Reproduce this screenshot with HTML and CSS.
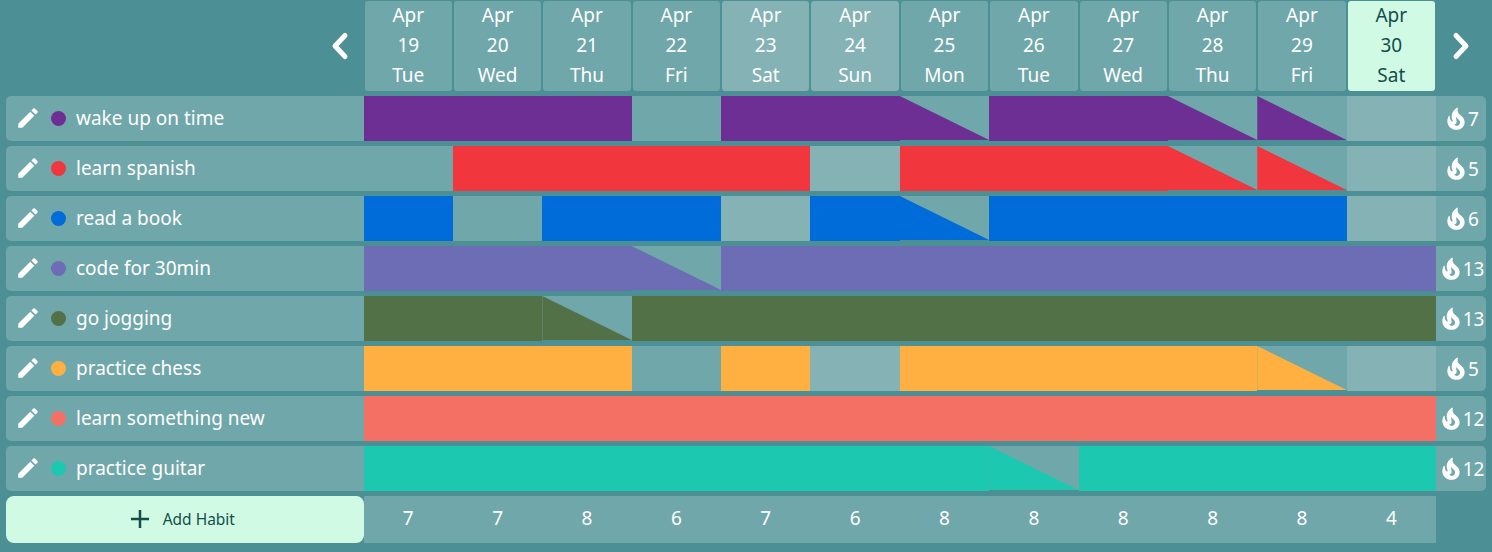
FILE: index.html
```html
<!DOCTYPE html>
<html lang="en">
<head>
    <meta charset="UTF-8">
    <meta name="viewport" content="width=device-width, initial-scale=1.0">
    <title>Habit Tracker</title>
    <link rel="stylesheet" href="styles.css">
</head>
<body>
    <svg class="sprites" aria-hidden="true">
        <symbol id="pencil" viewBox="0 0 24 24"><path d="M3 17.25V21h3.75L17.81 9.94l-3.75-3.75L3 17.25zM20.71 7.04c.39-.39.39-1.02 0-1.41l-2.34-2.34c-.39-.39-1.02-.39-1.41 0l-1.83 1.83 3.75 3.75 1.83-1.83z"/></symbol>
        <symbol id="flame" viewBox="0 0 24 24"><path fill-rule="evenodd" d="M19.48 12.35c-1.57-4.08-7.16-4.3-5.81-10.23.1-.44-.37-.78-.75-.55C9.29 3.71 6.68 8 8.87 13.62c.18.46-.36.89-.75.59-1.81-1.37-2-3.34-1.84-4.75.06-.52-.62-.77-.91-.34C4.69 10.16 4 11.84 4 14.37c.38 5.6 5.11 7.32 6.81 7.54 2.43.31 5.06-.14 6.95-1.87 2.08-1.93 2.84-5.01 1.72-7.69zM10.2 17.38c1.44-.35 2.18-1.39 2.38-2.31.33-1.43-.96-2.83-.09-5.09.33 1.87 3.27 3.04 3.27 5.08.08 2.53-2.66 4.7-5.56 2.32z"/></symbol>
    </svg>

    <main class="tracker">
        <header class="grid-row head">
            <button class="nav nav-prev" type="button" aria-label="Previous">
                <svg width="20" height="30" viewBox="0 0 20 30"><path d="M15 4.5 5 15l10 10.5"/></svg>
            </button>
            <div class="day">Apr<br>19<br>Tue</div>
            <div class="day">Apr<br>20<br>Wed</div>
            <div class="day">Apr<br>21<br>Thu</div>
            <div class="day">Apr<br>22<br>Fri</div>
            <div class="day weekend">Apr<br>23<br>Sat</div>
            <div class="day weekend">Apr<br>24<br>Sun</div>
            <div class="day">Apr<br>25<br>Mon</div>
            <div class="day">Apr<br>26<br>Tue</div>
            <div class="day">Apr<br>27<br>Wed</div>
            <div class="day">Apr<br>28<br>Thu</div>
            <div class="day">Apr<br>29<br>Fri</div>
            <div class="day today">Apr<br>30<br>Sat</div>
            <button class="nav nav-next" type="button" aria-label="Next">
                <svg width="20" height="30" viewBox="0 0 20 30"><path d="M5 4.5 15 15 5 25.5"/></svg>
            </button>
        </header>

        <section class="grid-row habit purple">
            <div class="name"><svg class="edit"><use href="#pencil"/></svg><span class="dot"></span>wake up on time</div>
            <i class="on"></i><i class="on"></i><i class="on"></i><i></i><i class="on"></i><i class="on"></i><i class="half"></i><i class="on"></i><i class="on"></i><i class="half"></i><i class="half"></i><i class="weekend"></i>
            <div class="streak"><svg class="fire"><use href="#flame"/></svg>7</div>
        </section>
        <section class="grid-row habit red">
            <div class="name"><svg class="edit"><use href="#pencil"/></svg><span class="dot"></span>learn spanish</div>
            <i></i><i class="on"></i><i class="on"></i><i class="on"></i><i class="on"></i><i class="weekend"></i><i class="on"></i><i class="on"></i><i class="on"></i><i class="half"></i><i class="half"></i><i class="weekend"></i>
            <div class="streak"><svg class="fire"><use href="#flame"/></svg>5</div>
        </section>
        <section class="grid-row habit blue">
            <div class="name"><svg class="edit"><use href="#pencil"/></svg><span class="dot"></span>read a book</div>
            <i class="on"></i><i></i><i class="on"></i><i class="on"></i><i class="weekend"></i><i class="on"></i><i class="half"></i><i class="on"></i><i class="on"></i><i class="on"></i><i class="on"></i><i class="weekend"></i>
            <div class="streak"><svg class="fire"><use href="#flame"/></svg>6</div>
        </section>
        <section class="grid-row habit indigo">
            <div class="name"><svg class="edit"><use href="#pencil"/></svg><span class="dot"></span>code for 30min</div>
            <i class="on"></i><i class="on"></i><i class="on"></i><i class="half"></i><i class="on"></i><i class="on"></i><i class="on"></i><i class="on"></i><i class="on"></i><i class="on"></i><i class="on"></i><i class="on"></i>
            <div class="streak"><svg class="fire"><use href="#flame"/></svg>13</div>
        </section>
        <section class="grid-row habit green">
            <div class="name"><svg class="edit"><use href="#pencil"/></svg><span class="dot"></span>go jogging</div>
            <i class="on"></i><i class="on"></i><i class="half"></i><i class="on"></i><i class="on"></i><i class="on"></i><i class="on"></i><i class="on"></i><i class="on"></i><i class="on"></i><i class="on"></i><i class="on"></i>
            <div class="streak"><svg class="fire"><use href="#flame"/></svg>13</div>
        </section>
        <section class="grid-row habit orange">
            <div class="name"><svg class="edit"><use href="#pencil"/></svg><span class="dot"></span>practice chess</div>
            <i class="on"></i><i class="on"></i><i class="on"></i><i></i><i class="on"></i><i class="weekend"></i><i class="on"></i><i class="on"></i><i class="on"></i><i class="on"></i><i class="half"></i><i class="weekend"></i>
            <div class="streak"><svg class="fire"><use href="#flame"/></svg>5</div>
        </section>
        <section class="grid-row habit coral">
            <div class="name"><svg class="edit"><use href="#pencil"/></svg><span class="dot"></span>learn something new</div>
            <i class="on"></i><i class="on"></i><i class="on"></i><i class="on"></i><i class="on"></i><i class="on"></i><i class="on"></i><i class="on"></i><i class="on"></i><i class="on"></i><i class="on"></i><i class="on"></i>
            <div class="streak"><svg class="fire"><use href="#flame"/></svg>12</div>
        </section>
        <section class="grid-row habit teal">
            <div class="name"><svg class="edit"><use href="#pencil"/></svg><span class="dot"></span>practice guitar</div>
            <i class="on"></i><i class="on"></i><i class="on"></i><i class="on"></i><i class="on"></i><i class="on"></i><i class="on"></i><i class="half"></i><i class="on"></i><i class="on"></i><i class="on"></i><i class="on"></i>
            <div class="streak"><svg class="fire"><use href="#flame"/></svg>12</div>
        </section>

        <footer class="grid-row totals">
            <button class="add" type="button">
                <svg width="18" height="18" viewBox="0 0 18 18"><path d="M9 0v18M0 9h18"/></svg>
                Add Habit
            </button>
            <div class="count">7</div>
            <div class="count">7</div>
            <div class="count">8</div>
            <div class="count">6</div>
            <div class="count">7</div>
            <div class="count">6</div>
            <div class="count">8</div>
            <div class="count">8</div>
            <div class="count">8</div>
            <div class="count">8</div>
            <div class="count">8</div>
            <div class="count">4</div>
        </footer>
    </main>
</body>
</html>
```

FILE: styles.css
```css
body {
    margin: 0;
    height: 552px;
    overflow: hidden;
    background-color: #4c8f94;
    color: #fff;
    font-family: 'Noto Sans', sans-serif;
    font-size: 19px;
}
.sprites {
    display: none;
}
.tracker {
    display: flex;
    flex-direction: column;
    gap: 5px;
    padding: 1px 6px 0;
}
.grid-row {
    display: grid;
    grid-template-columns: 357.6px repeat(12, 1fr) 50px;
}

/* date header */
.head {
    height: 90px;
}
.day {
    height: 90px;
    margin: 0 1px;
    border-radius: 3px;
    background-color: #70a7aa;
    line-height: 30px;
    text-align: center;
}
/* pulls the three lines up a pixel, this font sits low */
.day::before {
    content: '';
    display: block;
    margin-top: -1px;
}
.day.weekend {
    background-color: #84b2b5;
}
.day.today {
    background-color: #d1fae5;
    color: #134e4a;
}
.nav {
    display: flex;
    align-items: center;
    padding: 0;
    border: none;
    background: none;
}
.nav-prev {
    justify-content: flex-end;
    padding-right: 14px;
}
.nav-next {
    justify-content: flex-start;
    padding-left: 15px;
}
.nav path {
    fill: none;
    stroke: #fff;
    stroke-width: 5;
    stroke-linecap: round;
    stroke-linejoin: round;
}

/* habit rows */
.habit {
    height: 45px;
    border-radius: 5px;
    overflow: hidden;
}
.habit i {
    display: block;
    background-color: #70a7aa;
}
.habit i.weekend {
    background-color: #84b2b5;
}
.habit i.on {
    background-color: var(--color);
}
.habit i.half {
    height: 44px;
}
.habit i.half::before {
    content: '';
    display: block;
    height: 100%;
    background-color: var(--color);
    clip-path: polygon(0 0, 100% 100%, 0 100%);
}
.name {
    display: flex;
    align-items: center;
    padding: 0 0 1px 9px;
    background-color: #70a7aa;
}
.edit {
    width: 26px;
    height: 26px;
    margin-right: 10px;
    fill: #fff;
}
.dot {
    width: 15px;
    height: 15px;
    margin-right: 10px;
    border-radius: 50%;
    background-color: var(--color);
}
.streak {
    display: flex;
    align-items: center;
    justify-content: center;
    background-color: #70a7aa;
}
.fire {
    width: 26px;
    height: 26px;
    margin-right: -1px;
    fill: #fff;
}

.purple { --color: #6d2f94; }
.red { --color: #f1363d; }
.blue { --color: #006cd9; }
.indigo { --color: #6c6db5; }
.green { --color: #537146; }
.orange { --color: #ffb040; }
.coral { --color: #f57064; }
.teal { --color: #1cc8b0; }

/* bottom row */
.totals {
    height: 47px;
}
.add {
    display: flex;
    align-items: center;
    justify-content: center;
    gap: 14px;
    padding: 0 4px 2px 0;
    border: none;
    border-radius: 8px;
    background-color: #d1fae5;
    color: #134e4a;
    font-family: inherit;
    font-size: 15.5px;
}
.add path {
    fill: none;
    stroke: #134e4a;
    stroke-width: 2.5;
}
.count {
    background-color: #70a7aa;
    line-height: 45px;
    text-align: center;
}
```
